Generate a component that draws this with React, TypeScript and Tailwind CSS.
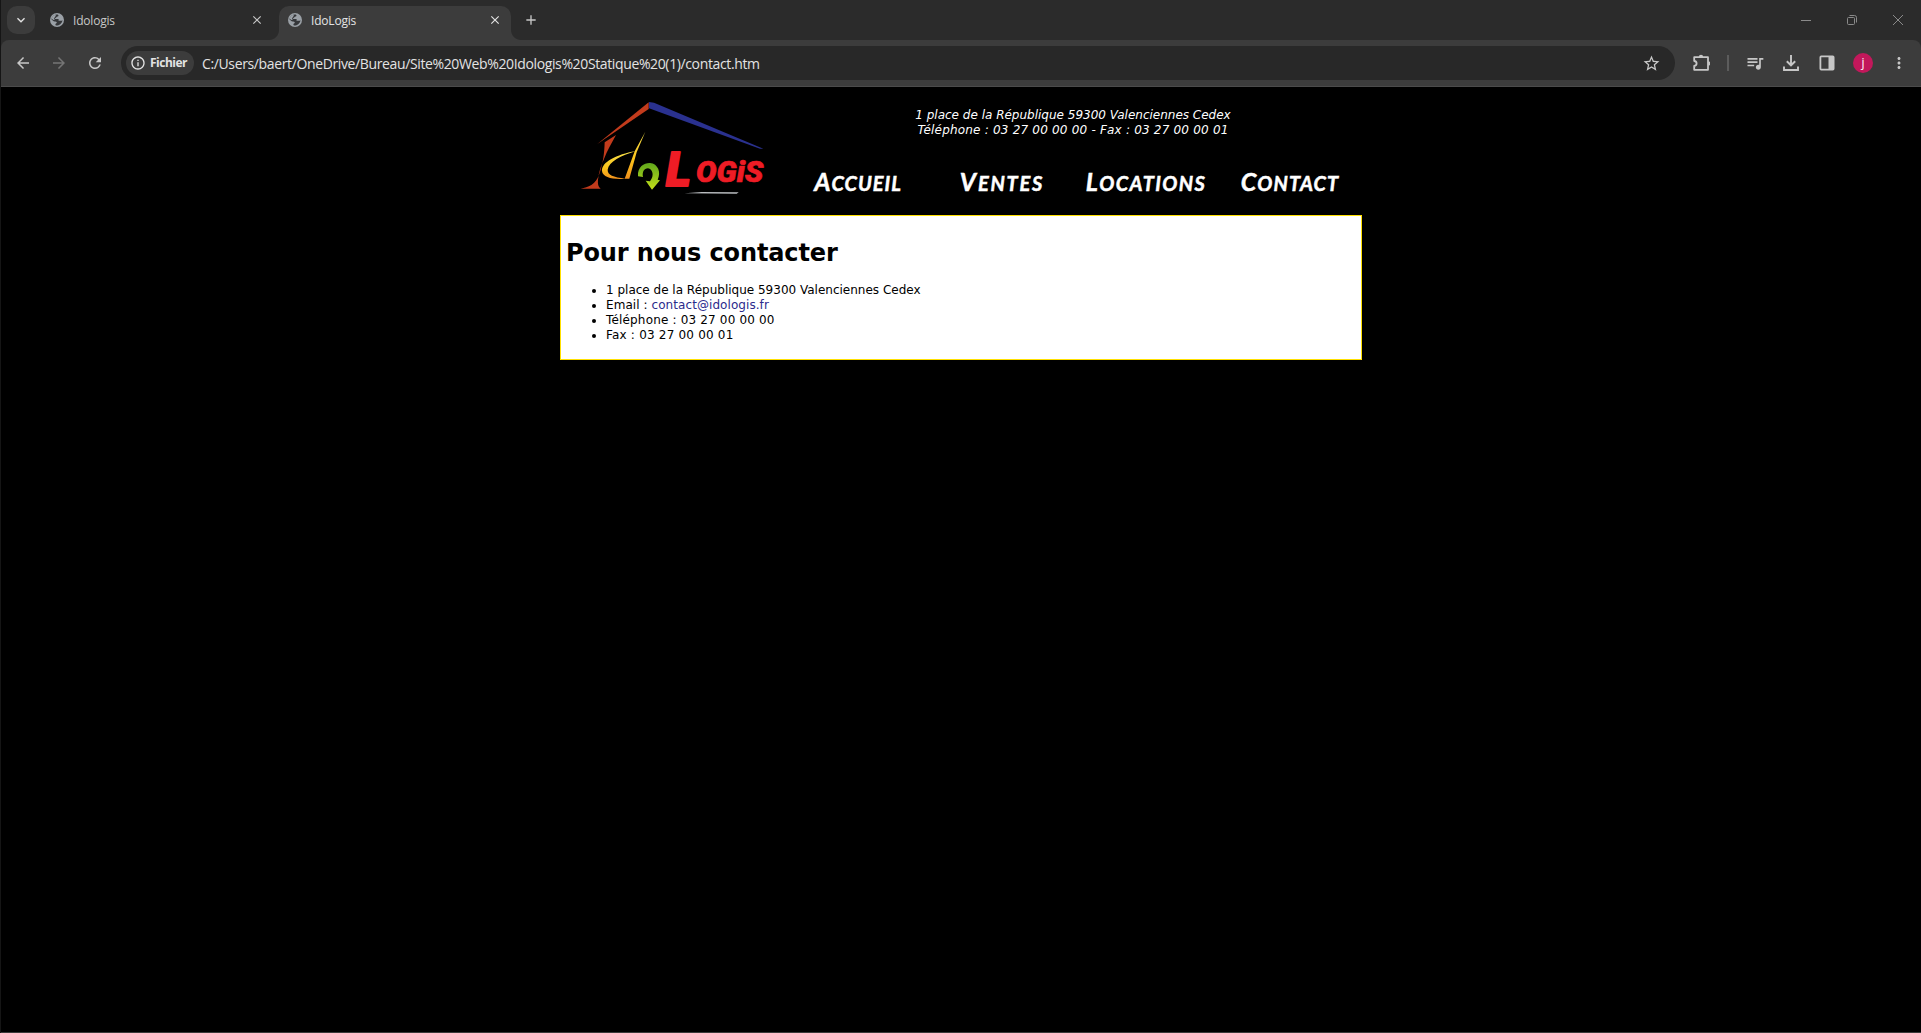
import type { ReactNode } from 'react';
import {
  MdAdd, MdArrowBack, MdArrowForward, MdClose, MdInfoOutline, MdKeyboardArrowDown,
  MdMoreVert, MdQueueMusic, MdRefresh, MdStarBorder,
} from 'react-icons/md';

function Globe() {
  return (
    <svg viewBox="0 0 14 14" className="size-[14px] shrink-0">
      <circle cx="7" cy="7" r="7" fill="#9aa0a6" />
      <path
        d="M7.6 1.6 C9 2.2 8.6 3.4 7.6 3.6 C6.4 3.8 6.4 4.6 5.6 5 C4.8 5.4 4.8 6 5.6 6 H8 C9 6 9 7.4 8.4 8 C10.2 7.6 11 8 12.4 7.2 C12.4 9.6 10.2 12 7.6 12.4 C6 12.6 5.4 12.2 5.4 11.4 C5.4 10.4 6.8 10.6 6.8 9.6 C6.8 8.4 5.4 8.6 4.6 8.4 C3.4 8.2 2.6 7.2 1.5 6.4 C1.8 3.6 4.6 1.2 7.6 1.6 Z"
        fill="#35373a"
      />
      <path d="M1.6 5.8 C3 6.8 3.6 7.2 4.8 7 C4 6 3.8 5 4.8 4.2 C5.6 3.8 5.4 2.6 6.4 1.6 C3.8 1.8 2 3.6 1.6 5.8 Z" fill="#9aa0a6" />
    </svg>
  );
}

function Slot({ children, className = '' }: { children: ReactNode; className?: string }) {
  return <div className={`flex h-9 w-9 shrink-0 items-center justify-center ${className}`}>{children}</div>;
}

function TabStrip() {
  return (
    <div className="flex h-10 shrink-0 items-start bg-[#2b2b2b] pl-[6px] text-[#c7c7c7]">
      <button className="mt-[6px] flex size-7 items-center justify-center rounded-[10px] bg-[#3c3c3c]">
        <MdKeyboardArrowDown size={16} className="text-[#e3e3e3]" />
      </button>
      <div className="flex h-10 w-[244px] items-center pr-[15px] pl-[15px]">
        <Globe />
        <span className="ml-[9px] flex-1 pt-[2px] text-[12px] tracking-[-0.2px]">Idologis</span>
        <MdClose size={14} />
      </div>
      <div className="relative mt-[6px] flex h-[34px] w-[232px] items-center rounded-t-[10px] bg-[#3c3c3c] pr-[9px] pb-[6px] pl-[9px] text-[#e3e3e3]">
        <div className="absolute bottom-0 -left-[10px] size-[10px] bg-[radial-gradient(circle_at_0_0,#2b2b2b_9.5px,#3c3c3c_10.5px)]" />
        <div className="absolute -right-[10px] bottom-0 size-[10px] bg-[radial-gradient(circle_at_100%_0,#2b2b2b_9.5px,#3c3c3c_10.5px)]" />
        <Globe />
        <span className="ml-[9px] flex-1 pt-[2px] text-[12px] tracking-[-0.2px]">IdoLogis</span>
        <MdClose size={14} />
      </div>
      <div className="flex h-10 w-10 items-center justify-center">
        <MdAdd size={16} />
      </div>
      <div className="flex-1" />
      <div className="flex h-10 items-center text-[#8a8a8a]">
        <div className="flex w-[46px] justify-center">
          <div className="h-px w-[10px] bg-current" />
        </div>
        <div className="flex w-[46px] justify-center">
          <svg viewBox="0 0 10 10" className="size-[10px]" fill="none" stroke="currentColor">
            <rect x="0.5" y="2.5" width="7" height="7" rx="1" />
            <path d="M2.5 0.5 H7.5 A2 2 0 0 1 9.5 2.5 V7.5" />
          </svg>
        </div>
        <div className="flex w-[46px] justify-center">
          <svg viewBox="0 0 10 10" className="size-[10px]" fill="none" stroke="currentColor">
            <path d="M0 0 L10 10 M10 0 L0 10" />
          </svg>
        </div>
      </div>
    </div>
  );
}

function Toolbar() {
  return (
    <div className="h-[47px] shrink-0 bg-[#2b2b2b]">
      <div className="flex h-[47px] items-center rounded-t-[8px] border-b border-[#4b4b4b] bg-[#3c3c3c] pr-[4px] pl-1 text-[#c7c7c7]">
        <Slot><MdArrowBack size={18} /></Slot>
        <Slot className="text-[#757575]"><MdArrowForward size={18} /></Slot>
        <Slot><MdRefresh size={18} /></Slot>
        <div className="ml-[8px] flex h-[34px] flex-1 items-center rounded-full bg-[#282828] pr-[14px] pl-[5px]">
          <div className="flex h-6 w-[68px] items-center rounded-full bg-[#3c3c3c] pl-[4px] text-[#e3e3e3]">
            <MdInfoOutline size={16} />
            <span className="ml-1 text-[12px] font-bold tracking-[-0.5px]">Fichier</span>
          </div>
          <span className="ml-2 flex-1 text-[14px] tracking-[-0.37px] whitespace-nowrap text-[#e3e3e3]">
            C:/Users/baert/OneDrive/Bureau/Site%20Web%20Idologis%20Statique%20(1)/contact.htm
          </span>
          <MdStarBorder size={19} />
        </div>
        <div className="w-2" />
        <Slot>
          <svg viewBox="0 0 18 18" className="size-[18px]" fill="none" stroke="currentColor" strokeWidth="1.8">
            <path d="M2.2 3.2 H16 V8 V15.8 H2.2 V12 C5.4 11.4 5.4 7.4 2.2 7 Z" strokeLinejoin="round" />
            <path d="M6.8 3 A2.2 2.2 0 0 1 11.2 3 Z M16.2 7.2 A2.2 2.2 0 0 1 16.2 11.6 Z" fill="currentColor" stroke="none" />
          </svg>
        </Slot>
        <div className="mx-2 h-4 w-[2px] bg-[#5c5c5c]" />
        <Slot><MdQueueMusic size={20} /></Slot>
        <Slot>
          <svg viewBox="0 0 16 16" className="size-4" fill="none" stroke="currentColor" strokeWidth="1.9">
            <path d="M8 0 V10 M3.8 6.2 L8 10.3 L12.2 6.2 M1 11.5 V15 H15 V11.5" />
          </svg>
        </Slot>
        <Slot>
          <svg viewBox="0 0 16 16" className="size-4" fill="none" stroke="currentColor" strokeWidth="1.8">
            <rect x="1.4" y="1.4" width="13.2" height="13.2" rx="0.8" />
            <path d="M9.5 1 H15 V15 H9.5 Z" fill="currentColor" stroke="none" />
          </svg>
        </Slot>
        <Slot>
          <div className="flex size-5 items-center justify-center rounded-full bg-[#c2185b] text-[12px] leading-none text-white">j</div>
        </Slot>
        <Slot><MdMoreVert size={18} /></Slot>
      </div>
    </div>
  );
}

function Logo() {
  return (
    <svg viewBox="0 6 690 384" className="h-32 w-[230px] shrink-0" role="img" aria-label="IdoLogis">
      <defs>
        <linearGradient id="gold" x1="0" y1="0" x2="0" y2="1">
          <stop offset="0" stopColor="#f5e04a" />
          <stop offset="0.6" stopColor="#fbc21a" />
          <stop offset="1" stopColor="#f0901c" />
        </linearGradient>
        <linearGradient id="leaf" x1="0" y1="0" x2="0" y2="1">
          <stop offset="0" stopColor="#5fa61c" />
          <stop offset="1" stopColor="#c5e01a" />
        </linearGradient>
      </defs>
      <path d="M112 177 L266 52 V72 Z" fill="#c23b1c" />
      <path d="M267 51 L282 53 L610 191 L600 191 L267 70 Z" fill="#2a318f" />
      <path d="M168 150 L134 172 C133 205 130 225 124 246 C118 274 108 292 94 300 C84 306 74 308 62 311 H122 C114 304 113 296 114 284 C116 262 124 240 132 222 C142 196 154 176 168 150 Z" fill="#c23b1c" />
      <path d="M226 199 C170 208 124 232 126 258 C128 278 160 284 196 281 C160 276 142 270 143 254 C146 230 184 212 226 199 Z" fill="url(#gold)" />
      <path d="M256 140 L224 199 L194 281 L208 281 L230 202 Z" fill="url(#gold)" />
      <path d="M234 274 C232 244 254 233 270 234 C294 236 304 262 293 284 L300 286 L276 314 L257 287 L270 289 C284 272 278 252 264 250 C252 250 246 262 249 276 Z" fill="url(#leaf)" />
      <g fill="#ee1c25" stroke="#ee1c25" strokeLinejoin="round" fontFamily="Roboto, sans-serif" fontWeight="900" fontStyle="italic">
        <text x="318" y="302" fontSize="146" strokeWidth="6" textLength="74" lengthAdjust="spacingAndGlyphs">L</text>
        <text x="408" y="292" fontSize="88" strokeWidth="2" textLength="202" lengthAdjust="spacingAndGlyphs">OGiS</text>
      </g>
      <path d="M374 325 L425 321 L536 322 L530 326 Z" fill="#b9bcbf" />
    </svg>
  );
}

function NavItem({ children, className }: { children: string; className: string }) {
  return (
    <a className={`block w-36 text-center font-['Lato'] text-[28px] leading-8 font-bold whitespace-nowrap italic [-webkit-text-stroke:0.5px_white] [font-variant:small-caps] first-letter:text-[25px] ${className}`}>
      {children}
    </a>
  );
}

export default function App() {
  return (
    <div className="flex h-[1033px] w-[1921px] flex-col overflow-hidden border-l border-[#151515] bg-black font-['Open_Sans',sans-serif]">
      <TabStrip />
      <Toolbar />
      <main className="mx-auto w-[802px] flex-1 font-['DejaVu_Sans',sans-serif] text-[12px] leading-[15px]">
        <header className="flex h-32">
          <div className="w-56"><Logo /></div>
          <div className="flex-1">
            <address className="pt-[21px] text-center text-white italic">
              <p>1 place de la République 59300 Valenciennes Cedex</p>
              <p className="tracking-[0.2px]">Téléphone : 03 27 00 00 00 - Fax : 03 27 00 00 01</p>
            </address>
            <nav className="mt-[26px] flex justify-end text-white">
              <NavItem className="tracking-[1px]">Accueil</NavItem>
              <NavItem className="tracking-[1.8px]">Ventes</NavItem>
              <NavItem className="tracking-[1.4px]">Locations</NavItem>
              <NavItem className="tracking-[1.1px]">Contact</NavItem>
            </nav>
          </div>
        </header>
        <section className="h-[145px] border border-[#ffe000] bg-white px-[5px] text-black">
          <h1 className="mt-[19px] text-[24px] leading-9 font-bold tracking-[-0.12px]">Pour nous contacter</h1>
          <ul className="mt-3 list-disc pl-10">
            <li>1 place de la République 59300 Valenciennes Cedex</li>
            <li className="tracking-[0.07px]">Email : <a className="text-[#2b2b8c]">contact@idologis.fr</a></li>
            <li className="tracking-[0.17px]">Téléphone : 03 27 00 00 00</li>
            <li className="tracking-[0.2px]">Fax : 03 27 00 00 01</li>
          </ul>
        </section>
      </main>
      <div className="h-px shrink-0 bg-[#3a3a3a]" />
    </div>
  );
}
